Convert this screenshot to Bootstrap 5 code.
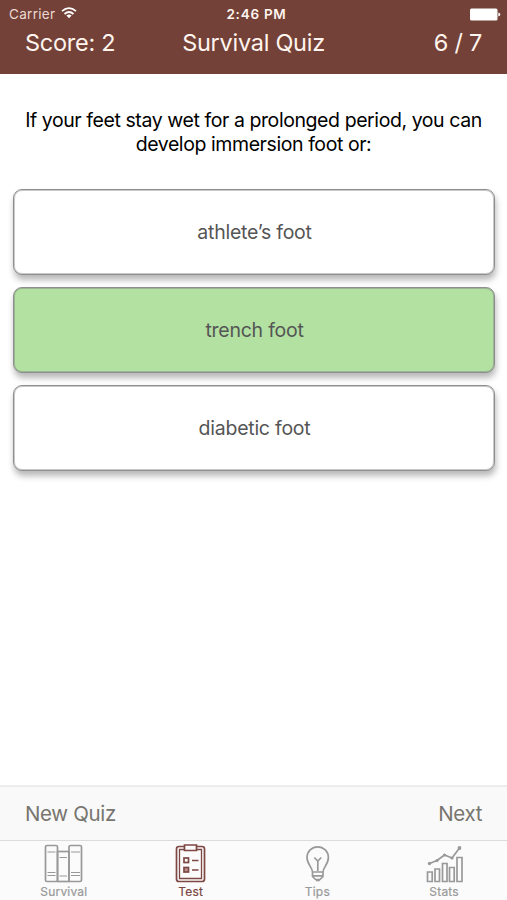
<!DOCTYPE html>
<html lang="en">
<head>
<meta charset="utf-8">
<meta name="viewport" content="width=device-width, initial-scale=1">
<title>Survival Quiz</title>
<link href="https://cdn.jsdelivr.net/npm/bootstrap@5.3.0/dist/css/bootstrap.min.css" rel="stylesheet">
<style>
body{font-family:Inter,"Liberation Sans",sans-serif;color:#111;height:900px;overflow:hidden;line-height:1.2}
.app-top{background:#734137;color:#fff4ee;height:74px}
.status-row{height:28px;font-size:13px;padding:0 6px 0 9px;display:grid;grid-template-columns:1fr auto 1fr}
.carrier{color:#ecd9d3;font-size:13.5px;letter-spacing:.3px}
.carrier svg{margin-left:6px;margin-bottom:2px}
.clock{font-weight:600;font-size:13.5px;letter-spacing:.75px;padding-left:3px}
.title-row{height:31px;padding:0 25px;font-size:23.5px;letter-spacing:-.27px;display:grid;grid-template-columns:1fr auto 1fr}
.question{font-size:19.5px;line-height:23.5px;padding:35px 20px 0;height:115px;letter-spacing:-.42px;color:#000}
.answers{padding:0 12.5px;gap:12px}
.answer{height:86px;border:1px solid #8e8e8e;border-radius:9px;background:#fff;color:#555;font-size:19.500px;letter-spacing:-.25px;padding:3px 5px 1px 7px;box-shadow:inset 0 0 0 1px rgba(120,120,120,.4),1px 5px 6px rgba(0,0,0,.28)}
.answer.correct{background:#b2e1a2}
.tool-row{height:55px;background:#f9f9f9;border-top:2px solid #ececec;padding:1px 25px 0;font-size:20.5px;letter-spacing:-.35px;color:#77756f}
.tabs-row{height:60px;background:#fbfbfb;border-top:1px solid #dcdcdc;font-size:12px;color:#999}
.tab{padding-top:3px;letter-spacing:.2px}
.tab.on{color:#7d4744}
.tab svg{fill:none;stroke:currentColor;stroke-width:1.7;margin-left:2px;margin-bottom:1px}
.tab span{line-height:15px;padding-left:1px;-webkit-text-stroke:.2px currentColor}
</style>
<script src="https://cdn.jsdelivr.net/npm/bootstrap@5.3.0/dist/js/bootstrap.bundle.min.js"></script>
</head>
<body class="d-flex flex-column bg-white">
<header class="app-top flex-shrink-0">
  <div class="status-row align-items-center">
    <div class="d-flex align-items-center carrier"><span>Carrier</span>
      <svg width="16" height="12" viewBox="0 0 16 12" fill="none" stroke="#fff" stroke-width="1.7"><path d="M1 4.2Q8-2 15 4.2M3.500 7Q8 3 12.500 7"/><path d="M8 11.2 5.4 8.6Q8 6.6 10.6 8.6Z" fill="#fff" stroke="none"/></svg>
    </div>
    <div class="clock">2:46 PM</div>
    <svg class="ms-auto" width="31" height="13" viewBox="0 0 31 13" fill="#fff"><rect x="0" y="0.5" width="27.5" height="12" rx="1.5"/><path d="M28.3 4.500q2 .3 2 2t-2 2z"/></svg>
  </div>
  <div class="title-row align-items-center">
    <div class="score">Score: 2</div><div class="quiz-name">Survival Quiz</div><div class="text-end progress-count">6 / 7</div>
  </div>
</header>
<main class="flex-grow-1">
  <p class="question text-center mb-0">If your feet stay wet for a prolonged period, you can<br>develop immersion foot or:</p>
  <div class="answers d-flex flex-column">
    <button class="answer w-100">athlete’s foot</button>
    <button class="answer correct w-100">trench foot</button>
    <button class="answer w-100">diabetic foot</button>
  </div>
</main>
<div class="tool-row d-flex justify-content-between align-items-center flex-shrink-0"><span>New Quiz</span><span>Next</span></div>
<nav class="tabs-row row g-0 flex-shrink-0">
  <div class="tab col d-flex flex-column align-items-center">
    <svg width="40" height="39" viewBox="0 0 40 39"><rect x="1.5" y="1.500" width="12" height="36" rx="1.5"/><rect x="13.500" y="7.5" width="11.500" height="30"/><rect x="25" y="1.500" width="12.5" height="36" rx="1.5"/><path d="M3.500 8h8M15.500 13.500h7.500M27 8h9M3.500 28.500h8M3.500 31.500h8M15.500 32h7.500M27 28.500h9M27 31.500h9" stroke-width="1.2"/></svg>
    <span>Survival</span></div>
  <div class="tab on col d-flex flex-column align-items-center">
    <svg width="40" height="39" viewBox="0 0 40 39"><path d="M14 2.500H8Q5.500 2.500 5.500 5V35Q5.500 37.500 8 37.500H31Q33.500 37.500 33.500 35V5Q33.500 2.500 31 2.500H26"/><path d="M14 5.500H8.500V34.500H30.500V5.500H26" stroke-width="1.300"/><path d="M13.500 6.500V1H25.500V6.500Z"/><rect x="13" y="14" width="4.500" height="4.500"/><rect x="13" y="23.500" width="4.500" height="4.500" fill="#b89691"/><path d="M21 16.500h6.500M21 26h6.500"/></svg>
    <span>Test</span></div>
  <div class="tab col d-flex flex-column align-items-center">
    <svg width="40" height="39" viewBox="0 0 40 39"><path d="M14.500 28C14.500 23.500 9 20.500 9 13.500A10.700 10.700 0 0 1 30.400 13.500C30.400 20.500 25 23.500 25 28ZM14.500 28V32.500L17.500 35.500H22L25 32.500V28M14.500 31.800H25M19.800 27V17M16.300 13.500 19.800 17 23.300 13.500"/><path d="M18 36.300h3.800" stroke-width="2"/></svg>
    <span>Tips</span></div>
  <div class="tab col d-flex flex-column align-items-center">
    <svg width="40" height="39" viewBox="0 0 40 39"><path d="M2.500 28h4.700v9.500H2.500zM10 25H14.500v12.500H10zM17.500 19.500H22v18h-4.500zM24.500 23.500h4.700v14h-4.700zM32 13.500h5v24h-5z"/><path d="M4.500 19.500 12 16.500 19.500 11 27 14 34.500 4"/><g fill="currentColor" stroke="none"><circle cx="4.500" cy="19.500" r="1.700"/><circle cx="12" cy="16.500" r="1.600"/><circle cx="19.500" cy="11" r="1.600"/><circle cx="27" cy="14" r="1.600"/><circle cx="34.500" cy="4" r="1.900"/></g></svg>
    <span>Stats</span></div>
</nav>
</body>
</html>
